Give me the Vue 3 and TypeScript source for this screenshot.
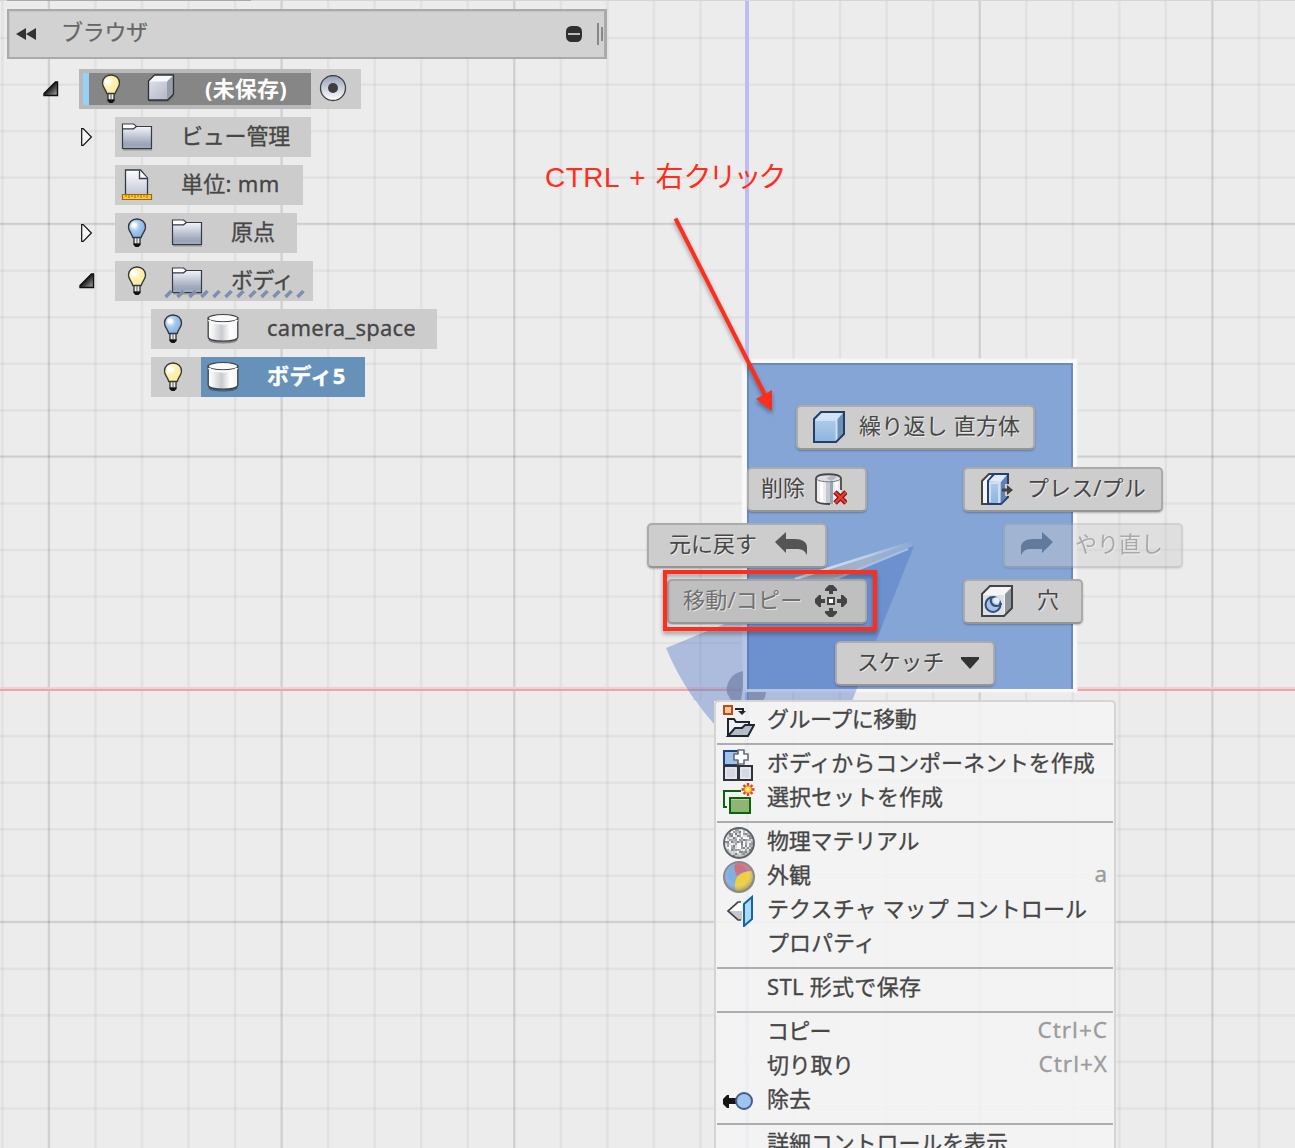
<script setup lang="ts">
interface TreeRow {
  label: string
  indent: number
  width: number
  arrow?: 'open' | 'closed'
  bulb?: 'on' | 'off'
  icon: string
  gap: number
  spacing?: number
  kind?: 'root' | 'selected' | 'marked'
}

interface RadialItem {
  id: string
  label: string
  x: number
  y: number
  width: number
  icon: string
  iconX: number
  textX: number
  spacing: number
}

interface MenuEntry {
  label: string
  icon?: string
  shortcut?: string
  spacing?: number
}

const PITCH = 46.54
const gridX = Array.from({ length: 28 }, (_, i) => ({ p: 747 + (i - 16) * PITCH, major: (i - 16) % 5 === 0 }))
const gridY = Array.from({ length: 26 }, (_, i) => ({ p: 689.6 + (i - 15) * PITCH, major: (i - 15) % 5 === 0 }))

const rows: TreeRow[] = [
  { label: 'ビュー管理', indent: 115, width: 196, arrow: 'closed', icon: 'folder', gap: 28, spacing: -0.2 },
  { label: '単位: mm', indent: 115, width: 188, icon: 'units', gap: 28, spacing: 0.3 },
  { label: '原点', indent: 115, width: 182, arrow: 'closed', bulb: 'off', icon: 'folder', gap: 28 },
  { label: 'ボディ', indent: 115, width: 198, arrow: 'open', bulb: 'on', icon: 'folder', gap: 28, spacing: -0.6, kind: 'marked' },
  { label: 'camera_space', indent: 151, width: 286, bulb: 'off', icon: 'body', gap: 28, spacing: 0.25 },
  { label: 'ボディ5', indent: 151, width: 214, bulb: 'on', icon: 'body', gap: 28, spacing: 0.4, kind: 'selected' },
]

const radial: RadialItem[] = [
  { id: 'repeat', label: '繰り返し 直方体', x: 796, y: 405, width: 239, icon: 'box', iconX: 17, textX: 63, spacing: 0.2 },
  { id: 'delete', label: '削除', x: 747, y: 467, width: 120, icon: 'delete', iconX: 68, textX: 14, spacing: 0 },
  { id: 'press', label: 'プレス/プル', x: 963, y: 467, width: 200, icon: 'press', iconX: 18, textX: 64, spacing: 0.1 },
  { id: 'undo', label: '元に戻す', x: 647, y: 523, width: 180, icon: 'undo', iconX: 128, textX: 22, spacing: 0 },
  { id: 'redo', label: 'やり直し', x: 1003, y: 523, width: 180, icon: 'redo', iconX: 18, textX: 72, spacing: 0 },
  { id: 'move', label: '移動/コピー', x: 667, y: 579, width: 200, icon: 'move', iconX: 148, textX: 16, spacing: 0.2 },
  { id: 'hole', label: '穴', x: 963, y: 579, width: 120, icon: 'hole', iconX: 18, textX: 74, spacing: 0 },
  { id: 'sketch', label: 'スケッチ', x: 835, y: 641, width: 160, icon: 'down', iconX: 119, textX: 22, spacing: -0.2 },
]

const groups: MenuEntry[][] = [
  [{ label: 'グループに移動', icon: 'group', spacing: -0.5 }],
  [
    { label: 'ボディからコンポーネントを作成', icon: 'component', spacing: -0.05 },
    { label: '選択セットを作成', icon: 'selset' },
  ],
  [
    { label: '物理マテリアル', icon: 'material', spacing: -0.2 },
    { label: '外観', icon: 'appearance', shortcut: 'a' },
    { label: 'テクスチャ マップ コントロール', icon: 'texture', spacing: 0.1 },
    { label: 'プロパティ' },
  ],
  [{ label: 'STL 形式で保存', spacing: 0.3 }],
  [
    { label: 'コピー', shortcut: 'Ctrl+C', spacing: -0.8 },
    { label: '切り取り', shortcut: 'Ctrl+X', spacing: -0.3 },
    { label: '除去', icon: 'remove' },
  ],
  [{ label: '詳細コントロールを表示', spacing: -0.1 }],
]

const SPECKLE_TONES = ['#7b8085', '#f8f8f8', '#b4b7ba', '#ffffff', '#989ca0', '#dddfe1']
const speckles = Array.from({ length: 196 }, (_, i) => {
  const x = 2 + (i % 14) * 2
  const y = 2 + Math.floor(i / 14) * 2
  const noise = Math.abs(Math.sin(i * 127.1 + 11.7) * 43758.5)
  return { x, y, c: SPECKLE_TONES[Math.floor(noise) % SPECKLE_TONES.length] }
}).filter((s) => Math.hypot(s.x - 15, s.y - 15) < 14)
</script>

<template>
  <main class="app">
    <svg class="defs" width="0" height="0" aria-hidden="true">
      <defs>
        <linearGradient id="gFolder" x1="0" y1="0" x2="0" y2="1"><stop offset="0" stop-color="#f3f5f9" /><stop offset=".8" stop-color="#9aa3b8" /><stop offset="1" stop-color="#a5adbf" /></linearGradient>
        <linearGradient id="gFace" x1="0" y1="0" x2="1" y2="1"><stop offset="0" stop-color="#dcdfe8" /><stop offset="1" stop-color="#b3b8c6" /></linearGradient>
        <linearGradient id="gPage" x1="0" y1="0" x2="0" y2="1"><stop offset="0" stop-color="#ffffff" /><stop offset="1" stop-color="#bdc3d2" /></linearGradient>
        <linearGradient id="gCyl"><stop offset="0" stop-color="#ffffff" /><stop offset=".15" stop-color="#f4f4f5" /><stop offset=".45" stop-color="#c9cbd0" /><stop offset=".75" stop-color="#ffffff" /><stop offset="1" stop-color="#f4f4f4" /></linearGradient>
        <linearGradient id="gBlue" x1="0" y1="0" x2="0" y2="1"><stop offset="0" stop-color="#b9d2ee" /><stop offset="1" stop-color="#8fb4de" /></linearGradient>
        <linearGradient id="gRadio" x1="0" y1="0" x2="0" y2="1"><stop offset="0" stop-color="#97a0b8" /><stop offset="1" stop-color="#ffffff" /></linearGradient>
        <linearGradient id="gOpen" x1="0" y1="0" x2="1" y2="1"><stop offset=".4" stop-color="#111111" /><stop offset=".85" stop-color="#888888" /></linearGradient>
        <linearGradient id="gBeam"><stop offset="0" stop-color="#9aa5b4" /><stop offset=".55" stop-color="#a3b2c8" /><stop offset="1" stop-color="#8eabd8" /></linearGradient>
        <linearGradient id="gRim" gradientUnits="userSpaceOnUse" x1="795" y1="579" x2="912" y2="542"><stop offset="0" stop-color="#d9e3f2" /><stop offset=".6" stop-color="#bed0eb" /><stop offset="1" stop-color="#88a8d8" /></linearGradient>
        <radialGradient id="gOn" cx=".35" cy=".35" r=".7"><stop offset="0" stop-color="#ffffff" /><stop offset=".45" stop-color="#fff1b0" /><stop offset="1" stop-color="#fde99b" /></radialGradient>
        <radialGradient id="gOff" cx=".35" cy=".35" r=".7"><stop offset="0" stop-color="#ffffff" /><stop offset=".45" stop-color="#a5c8ee" /><stop offset="1" stop-color="#84afe0" /></radialGradient>
        <radialGradient id="gShade" cx=".45" cy=".4" r=".6"><stop offset=".5" stop-color="#ffffff" stop-opacity="0" /><stop offset="1" stop-color="#555555" stop-opacity=".55" /></radialGradient>
      </defs>
      <symbol id="i-bulb-on" viewBox="0 0 22 32">
        <path d="M8 20h6v7H8z" fill="#eeeeee" stroke="#222222" stroke-width="1.2" />
        <path d="M7.5 26.500h7v1.500l-2 2h-3l-2-2z" fill="#111111" /><path d="M11 21v5" stroke="#888888" stroke-width="1.500" />
        <path d="M11 2c-5 0-8.500 3.500-8.500 8.200 0 4 2.800 5.300 4.300 10.300h8.400c1.500-5 4.300-6.300 4.300-10.300C19.500 5.500 16 2 11 2z" fill="url(#gOn)" stroke="#33373c" stroke-width="1.300" /><circle cx="8" cy="8" r="3" fill="#ffffff" />
      </symbol>
      <symbol id="i-bulb-off" viewBox="0 0 22 32">
        <path d="M8 20h6v7H8z" fill="#eeeeee" stroke="#222222" stroke-width="1.2" />
        <path d="M7.500 26.500h7v1.500l-2 2h-3l-2-2z" fill="#111111" /><path d="M11 21v5" stroke="#888888" stroke-width="1.500" />
        <path d="M11 2c-5 0-8.500 3.500-8.500 8.200 0 4 2.800 5.300 4.300 10.300h8.400c1.500-5 4.300-6.300 4.300-10.300C19.500 5.500 16 2 11 2z" fill="url(#gOff)" stroke="#33373c" stroke-width="1.300" /><circle cx="8" cy="8" r="2.600" fill="#ffffff" />
      </symbol>
      <symbol id="i-cube" viewBox="0 0 32 32">
        <path d="M3.500 8l6-6h19v19l-6 6h-19z" fill="#f7f8fa" /><path d="M4 8.500h18v18H4z" fill="url(#gFace)" /><path d="M22 8.500l6-6v18l-6 6z" fill="#969dab" />
        <path d="M3.500 8l6-6h19v19l-6 6h-19z" fill="none" stroke="#2c3036" stroke-width="1.300" stroke-linejoin="round" /><path d="M4 28h19l5.500-5.500" fill="none" stroke="#00000030" stroke-width="1.500" />
      </symbol>
      <symbol id="i-folder" viewBox="0 0 32 32">
        <path d="M2 28.500h29" stroke="#00000044" stroke-width="2" /><path d="M1.500 5.500v22h29v-22z" fill="url(#gFolder)" />
        <path d="M1.500 27.500v-24.500h11l3 2.500h15v22z" fill="none" stroke="#343b48" stroke-width="1.200" /><path d="M2.200 3.700h10l2 1.500-2 2h-10z" fill="#ffffff" /><path d="M1.500 7.800h11l3-2.300" fill="none" stroke="#343b48" stroke-width="1.200" />
      </symbol>
      <symbol id="i-units" viewBox="0 0 32 32">
        <path d="M4.500 27v-26h15l7 8v18z" fill="url(#gPage)" stroke="#343b48" stroke-width="1.300" /><path d="M18.500 1.500v8h8" fill="#ffffff" stroke="#343b48" stroke-width="1.300" />
        <path d="M1.500 25.500h29v5h-29z" fill="#f5cc3c" stroke="#a86508" stroke-width="1.200" /><path d="M5 26v2m3-2v3m3-3v2m3-2v3m3-3v2m3-2v3m3-3v2m3-2v3" stroke="#a86508" />
      </symbol>
      <symbol id="i-body" viewBox="0 0 32 32">
        <path d="M2 26.500c2 4 26 4 28 0" fill="none" stroke="#00000055" stroke-width="2" /><path d="M1.200 5v19c0 5.500 29.600 5.500 29.600 0V5z" fill="url(#gCyl)" stroke="#3c4046" stroke-width="1.300" /><ellipse cx="16" cy="5.200" rx="14.800" ry="3.700" fill="#fafafa" stroke="#3c4046" stroke-width="1.200" /><path d="M2 7c2 4.500 26 4.500 28 0" fill="none" stroke="#fafafa" stroke-width="2.500" />
      </symbol>
      <symbol id="i-box" viewBox="0 0 32 32">
        <path d="M1 8l7-7h23v22l-8 8H1z" fill="url(#gBlue)" /><path d="M2 9l7-7h21l-7 7z" fill="#d2e3f4" /><path d="M24 9l6-7v21l-6 6z" fill="#6f90b9" /><path d="M2.500 9h21v20.500" fill="none" stroke="#cde0f4" stroke-width="2" /><path d="M1 8l7-7h23v22l-8 8H1z" fill="none" stroke="#233e6b" stroke-width="2" />
      </symbol>
      <symbol id="i-delete" viewBox="0 0 32 32">
        <path d="M1 5v23c2 4 22 4 25 0V5z" fill="#e9ebee" /><path d="M5 8v22h3V9zM20 8h3v20h-3z" fill="#ffffff" /><path d="M11 9h4v22h-4z" fill="#c3c9d2" /><path d="M15 9h3v22h-3z" fill="#9ba3b0" /><ellipse cx="13.500" cy="5" rx="12.500" ry="4" fill="#dce0e5" /><path d="M12 6c0-3 7-4 10-2l-5 4z" fill="#b3bac4" /><path d="M1 28V5c2-5 23-5 25 0v12M1 28c2 3 9 3 14 3" fill="none" stroke="#484848" stroke-width="1.800" /><path d="M2 6.500c3 3 20 3 23 0" fill="none" stroke="#777777" stroke-width="1" />
        <path d="M20 19l11 11M31 19L20 30" stroke="#7e1c18" stroke-width="5" /><path d="M20 19l11 11M31 19L20 30" stroke="#f23b2c" stroke-width="2.400" />
      </symbol>
      <symbol id="i-press" viewBox="0 0 32 32">
        <path d="M1 31V8l7-7h7L7 9v22z" fill="#f3f4f6" stroke="#444444" stroke-width="2" /><path d="M7 8l6-7h14v23l-7 7H7z" fill="url(#gBlue)" stroke="#243f70" stroke-width="2" /><path d="M8 8l6-6h12l-6 7z" fill="#e0eafa" /><path d="M20 9l6-7v21l-6 7z" fill="#6181b5" /><path d="M9 29V10h9v20" fill="none" stroke="#cfe0f5" stroke-width="2" />
        <path d="M24 11h4v12h-4z" fill="#cdcdcd" /><path d="M21 15.500h5v-3.500l6 5-6 5v-3.500h-5z" fill="#444444" />
      </symbol>
      <symbol id="i-undo" viewBox="0 0 32 32"><path d="M11 3v7h9c7 0 12 3 12 8v8l-2-3c-3-3-5-3-10-3h-9v4L0 13z" fill="#545454" /></symbol>
      <symbol id="i-redo" viewBox="0 0 32 32"><path d="M21 3v7h-9C5 10 0 13 0 18v8l2-3c3-3 5-3 10-3h9v4l11-11z" fill="#303b46" /></symbol>
      <symbol id="i-move" viewBox="0 0 32 32">
        <path d="M14 9V6h-4V4l4-4h4l4 4v2h-4v3zM14 23v3h-4v2l4 4h4l4-4v-2h-4v-3zM10 14H6v-4H4l-4 4v4l4 4h2v-4h4zM22 14h4v-4h2l4 4v4l-4 4h-2v-4h-4z" fill="#444444" /><path d="M13 13h6v6h-6z" fill="#ffffff" stroke="#444444" stroke-width="2" />
      </symbol>
      <symbol id="i-hole" viewBox="0 0 32 32">
        <path d="M1 9l8-8h22v22l-8 8H1z" fill="#f4f5f7" /><path d="M24 9l7-7v21l-7 7z" fill="#8e969f" /><path d="M2 10h21v20H2z" fill="#dde1e8" /><path d="M1 9l8-8h22v22l-8 8H1z" fill="none" stroke="#444444" stroke-width="2" />
        <circle cx="12" cy="19.500" r="7.500" fill="#a6c3e6" stroke="#344f7c" stroke-width="2" /><path d="M11 12c-3 4 0 9 4 9 3 0 5-1 5-3" fill="none" stroke="#344f7c" stroke-width="2" /><circle cx="15.500" cy="15.500" r="3.300" fill="#e8eef7" />
      </symbol>
      <symbol id="i-down" viewBox="0 0 32 32"><path d="M7 10h18v2l-9 10-9-10z" fill="#333333" /></symbol>
      <symbol id="i-group" viewBox="0 0 32 32">
        <path d="M1 1h8v8H1z" fill="#ffc79c" stroke="#c24b14" stroke-width="2" /><path d="M12 4h8v3" fill="none" stroke="#1f262e" stroke-width="2" /><path d="M15 6h8l-4 4z" fill="#1f262e" />
        <path d="M5 31V14h6l2 3h13v5" fill="#eef0f5" stroke="#1f262e" stroke-width="2" /><path d="M5 31l7-8h7l3-3h9l-6 11z" fill="#b6bdca" stroke="#1f262e" stroke-width="2" />
      </symbol>
      <symbol id="i-component" viewBox="0 0 32 32">
        <path d="M1 2h14v14H1z" fill="#a1c3eb" stroke="#20407a" stroke-width="2" /><path d="M1 17h14v14H1zM16 17h13v14H16z" fill="#d5d8e1" stroke="#30343a" stroke-width="2" /><path d="M3 19h10v10H3zM18 19h9v10h-9z" fill="none" stroke="#eef0f4" />
        <path d="M15 1h6v4h4v6h-4v4h-6v-4h-4V5h4z" fill="#ffffff" stroke="#687078" stroke-width="1.700" stroke-linejoin="round" />
      </symbol>
      <symbol id="i-selset" viewBox="0 0 32 32">
        <path d="M4 24H1V8h17" fill="none" stroke="#0b640d" stroke-width="2" /><path d="M7 15h20v15H7z" fill="#8fb575" stroke="#0b640d" stroke-width="2" /><path d="M8 16.500h18" stroke="#b9d3a4" />
        <path d="M25 0v13M18.500 6.500h13M20.500 2l9 9M29.500 2l-9 9" stroke="#e54017" stroke-width="2.400" /><circle cx="25" cy="6.500" r="3.600" fill="#ffdc44" stroke="#ee7a20" stroke-width=".8" /><circle cx="25" cy="6.500" r="1.500" fill="#fff5b0" />
      </symbol>
      <symbol id="i-material" viewBox="0 0 32 32">
        <circle cx="16" cy="16" r="15" fill="#c4c7ca" /><rect v-for="(s, i) in speckles" :key="i" :x="s.x" :y="s.y" width="2" height="2" :fill="s.c" /><circle cx="16" cy="16" r="15" fill="url(#gShade)" stroke="#5b6168" stroke-width="1.800" />
      </symbol>
      <symbol id="i-appearance" viewBox="0 0 32 32">
        <circle cx="16" cy="16" r="15" fill="#82aee2" /><path d="M12 1.500C19-1 27 3 29 10c-7 0-11 1-15 5-3-5-3-9-2-13.500z" fill="#ce7281" /><path d="M29.500 10c4 10-5 22-16.500 21-2-6-1-11 1-15 4-4 9-6 15.500-6z" fill="#f0d03c" /><circle cx="16" cy="16" r="15" fill="url(#gShade)" stroke="#888a8e" stroke-width="2" />
      </symbol>
      <symbol id="i-texture" viewBox="0 0 32 32">
        <path d="M19 7h-4L5 16l10 9h4z" fill="#ffffff" /><path d="M19 16v9h-4L5 16z" fill="#c7c8cf" /><path d="M18 25h-3L5 16l10-9h3" fill="none" stroke="#41464d" stroke-width="1.700" /><path d="M21 9l8-7v22l-8 7z" fill="#abdcf1" stroke="#1264ad" stroke-width="2" />
      </symbol>
      <symbol id="i-remove" viewBox="0 0 32 32"><path d="M0 14l4-4h2v3h8v6H6v4H4l-4-4z" fill="#151515" /><circle cx="21" cy="16" r="8" fill="#9fc4ee" stroke="#425d8c" stroke-width="2" /></symbol>
    </svg>

    <svg class="scene" width="1295" height="1148" viewBox="0 0 1295 1148" aria-hidden="true">
      <g v-for="l in gridX" :key="'x' + l.p">
        <line :x1="l.p" :x2="l.p" y1="0" y2="1148" stroke="#000000" stroke-width="2.600" stroke-opacity=".045" />
        <line v-if="l.major" :x1="l.p" :x2="l.p" y1="0" y2="1148" stroke="#000000" stroke-width="2.200" stroke-opacity=".075" />
      </g>
      <g v-for="l in gridY" :key="'y' + l.p">
        <line :y1="l.p" :y2="l.p" x1="0" x2="1295" stroke="#000000" stroke-width="2.600" stroke-opacity=".04" />
        <line v-if="l.major" :y1="l.p - .5" :y2="l.p - .5" x1="0" x2="1295" stroke="#000000" stroke-width="2" stroke-opacity=".09" />
      </g>
      <path d="M747 1v1147" stroke="#bdbdf2" stroke-width="4" />
      <path d="M0 688h1295" stroke="#ebd3d3" stroke-width="2" /><path d="M0 690h1295" stroke="#f2a4a4" stroke-width="2" />
      <path d="M0 .5h1295" stroke="#d5d5d5" /><path d="M7 .5h244" stroke="#aaaaaa" />
      <rect x="742" y="359" width="335" height="333" fill="#fafafa" stroke="#f2f2f2" />
      <rect x="747" y="363" width="326" height="326" fill="#84a5d6" /><path d="M748 689V364h324v325" fill="none" stroke="#668bc4" stroke-width="2" />
      <path d="M914 546L666 648A268 268 0 0 0 692 696L696 701H852z" fill="#4870c3" fill-opacity=".385" />
      <path d="M693 697A268 268 0 0 0 714 724V700H694z" fill="#adbcdc" />
      <path d="M795 579L906 543l8 2-78 34z" fill="url(#gBeam)" /><path d="M795 579L912 542" stroke="url(#gRim)" stroke-width="2.500" /><path d="M833 580L908 549" stroke="#a7c0e5" stroke-width="2" />
      <path d="M743 671a19 19 0 0 0-16 22l4 7h10l2-12z" fill="#7484aa" fill-opacity=".75" /><path d="M747 692h19a19 19 0 0 1-3 9h-16z" fill="#667795" fill-opacity=".6" />
    </svg>

    <section class="browser">
      <header class="panel-head">
        <svg width="20" height="14" viewBox="0 0 20 14"><path d="M10 1v12L0 7zM20 1v12l-10-6z" fill="#333333" /></svg>
        <span class="panel-title">ブラウザ</span>
        <svg width="40" height="26" viewBox="0 0 40 26"><rect x="2" y="5" width="16" height="16" rx="5.500" fill="#2f2f2f" /><path d="M4 13h12" stroke="#bbbbbb" stroke-width="2" /><path d="M34 2v22M38 6v14" stroke="#888888" stroke-width="2" /></svg>
      </header>

      <div class="tree">
        <div class="row root">
          <svg class="arrow" width="16" height="16" viewBox="0 0 16 16"><path d="M1 14.500v-2L12.500 1h2v13.500z" fill="url(#gOpen)" stroke="#111111" stroke-width="1.400" /></svg>
          <div class="root-main">
            <div class="root-core">
              <svg width="22" height="32"><use href="#i-bulb-on" /></svg>
              <svg class="root-cube" width="32" height="32"><use href="#i-cube" /></svg>
              <span class="root-label">(未保存)</span>
            </div>
          </div>
          <div class="root-side">
            <svg width="28" height="28" viewBox="0 0 28 28"><circle cx="14" cy="13" r="12.500" fill="url(#gRadio)" stroke="#3c4046" stroke-width="1.300" /><circle cx="14" cy="13" r="5" fill="#3e3e40" /></svg>
          </div>
        </div>
        <div v-for="r in rows" :key="r.label" class="row" :style="{ paddingLeft: r.indent + 'px' }">
          <svg v-if="r.arrow === 'closed'" class="arrow child" width="16" height="20" viewBox="0 0 16 20"><path d="M2.700 1.700h1.500l8.200 8.300-8.200 8.300H2.700z" fill="#f6f6f6" stroke="#111111" stroke-width="1.200" /></svg>
          <svg v-if="r.arrow === 'open'" class="arrow child" width="16" height="16" viewBox="0 0 16 16"><path d="M1 14.500v-2L12.500 1h2v13.500z" fill="url(#gOpen)" stroke="#111111" stroke-width="1.400" /></svg>
          <div class="cell" :class="r.kind" :style="{ width: r.width + 'px' }">
            <div v-if="r.bulb" class="bulb"><svg width="22" height="32"><use :href="'#i-bulb-' + r.bulb" /></svg></div>
            <div class="node">
              <svg width="32" height="32"><use :href="'#i-' + r.icon" /></svg>
              <span :style="{ marginLeft: r.gap + 'px', letterSpacing: (r.spacing ?? 0) + 'px' }">{{ r.label }}</span>
            </div>
            <svg v-if="r.kind === 'marked'" class="hatch" width="142" height="10" viewBox="0 0 142 10"><path v-for="n in 12" :key="n" :d="`M${(n - 1) * 12 + 1.5} 8l6-6`" stroke="#7d8fb0" stroke-width="3.500" /></svg>
          </div>
        </div>
      </div>
    </section>

    <button v-for="b in radial" :key="b.id" class="radial" :class="b.id" type="button" :style="{ left: b.x + 'px', top: b.y + 'px', width: b.width + 'px' }">
      <svg width="32" height="32" :style="{ left: b.iconX + 'px' }"><use :href="'#i-' + b.icon" /></svg>
      <span :style="{ left: b.textX + 'px', letterSpacing: b.spacing + 'px' }">{{ b.label }}</span>
    </button>

    <nav class="menu">
      <div v-for="(g, gi) in groups" :key="gi" class="group">
        <div v-for="m in g" :key="m.label" class="item">
          <div class="slot"><svg v-if="m.icon" width="32" height="32"><use :href="'#i-' + m.icon" /></svg></div>
          <span :style="{ letterSpacing: (m.spacing ?? 0) + 'px' }">{{ m.label }}</span>
          <kbd v-if="m.shortcut">{{ m.shortcut }}</kbd>
        </div>
      </div>
    </nav>

    <div class="note"><span class="latin">CTRL</span><span class="plus">+</span><span class="kanji">右</span><span class="kana">クリック</span></div>
    <svg class="marks" width="1295" height="1148" viewBox="0 0 1295 1148" aria-hidden="true">
      <path d="M675.500 218.500L765 395" stroke="#ff2d1c" stroke-width="4" /><path d="M772 411l-16-12 16-9z" fill="#ff2d1c" />
      <rect x="665" y="572" width="210" height="57" fill="none" stroke="#ff2d1c" stroke-width="4" />
    </svg>
  </main>
</template>

<style>
body { margin: 0; overflow: hidden; }
</style>

<style scoped>
.app { position: relative; width: 1295px; height: 1148px; overflow: hidden; background: #ececec; color: #464646; font: 22px/34px "Noto Sans", "Noto Sans CJK JP", sans-serif; }
.app svg { display: block; flex: none; }
.defs, .scene, .marks { position: absolute; left: 0; top: 0; }
.marks { pointer-events: none; filter: drop-shadow(0 3px 2px rgba(0, 0, 0, .35)); }
.browser { position: relative; padding: 9px 0 0 7px; }
.panel-head { display: flex; align-items: center; box-sizing: border-box; width: 600px; height: 50px; padding: 0 0 0 7px; border: 2px solid #aaa; border-right-width: 3px; background: #d2d2d2; box-shadow: inset 1px 1px 0 #c5c5c5; }
.panel-title { flex: 1; margin: -6px 0 0 25px; color: #666; letter-spacing: -.3px; -webkit-text-stroke: .2px #666; }
.tree { display: flex; flex-direction: column; gap: 8px; margin: 10px 0 0 -7px; }
.row { position: relative; display: flex; height: 40px; white-space: nowrap; }
.root { padding-left: 79px; }
.arrow { position: absolute; left: 43px; top: 12px; }
.arrow.child { left: 79px; top: 12px; }
.arrow.child[height="20"] { top: 10px; }
.root-main { box-sizing: border-box; width: 232px; padding: 4px 0 4px 4px; background: #b9b9b9; }
.root-core { display: flex; align-items: center; height: 32px; box-sizing: border-box; padding-left: 11px; border-left: 6px solid #97d2f6; background: #868686; }
.root-cube { margin-left: 23px; }
.root-label { margin: -3px 0 0 28px; color: #fff; font-weight: 700; letter-spacing: .2px; }
.root-side { display: flex; align-items: center; width: 50px; padding-left: 8px; box-sizing: border-box; background: #ccc; }
.cell { position: relative; display: flex; background: #ccc; }
.bulb { display: flex; align-items: center; width: 50px; padding-left: 11px; box-sizing: border-box; }
.node { display: flex; align-items: center; flex: 1; padding-left: 6px; }
.node span { margin-top: -4px; -webkit-text-stroke: .3px currentColor; }
.selected .node { background: #6692ba; color: #fff; font-weight: 700; }
.hatch { position: absolute; left: 49px; top: 28px; }
.radial { position: absolute; box-sizing: border-box; height: 45px; padding: 0; border: 2px solid #ababab; border-bottom-color: #969696; border-radius: 5px; background: #cdcdcd; color: #464646; font: inherit; box-shadow: 0 1px 2px rgba(0, 0, 0, .25); text-shadow: 1px 1px 0 rgba(255, 255, 255, .6); }
.radial svg { position: absolute; top: 4px; margin-left: -2px; }
.radial span { position: absolute; top: 1px; margin-left: -2px; white-space: nowrap; }
.redo { opacity: .4; }
.move { background: #bfbfbf; color: #707070; }
.menu { position: absolute; left: 714px; top: 700px; box-sizing: border-box; width: 402px; height: 460px; border: 2px solid #d4d4d4; border-radius: 5px; background: rgba(244, 244, 244, .88); }
.group + .group { margin: 7px 1px 0; padding-top: 1px; border-top: 2px solid #adadad; }
.group:first-child { margin: 0 1px; }
.item { display: flex; height: 34px; line-height: 32px; white-space: nowrap; -webkit-text-stroke: .3px currentColor; }
.slot { width: 50px; padding: 3px 0 0 6px; box-sizing: border-box; }
.item kbd { margin-left: auto; padding-right: 5px; color: #9c9c9c; font: inherit; font-size: 22.500px; letter-spacing: 1px; -webkit-text-stroke: .3px currentColor; }
.note { position: absolute; left: 545px; top: 158px; display: flex; color: #ff2d1c; font: 28px/40px "Liberation Sans", "Noto Sans CJK JP", sans-serif; white-space: nowrap; }
.latin { letter-spacing: .5px; }
.plus { margin-left: 9px; }
.kanji { margin-left: 10px; }
.kana { letter-spacing: -3px; }
</style>
